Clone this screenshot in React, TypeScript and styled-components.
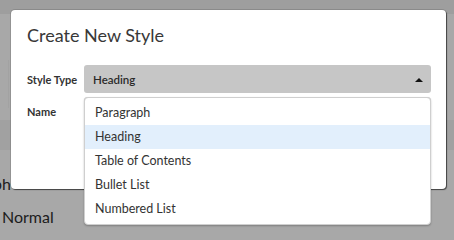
import React from "react";
import styled, { createGlobalStyle } from "styled-components";

const Global = createGlobalStyle`
  html, body { margin: 0; padding: 0; }
  body {
    width: 454px; height: 240px; overflow: hidden;
    font-family: Lato, "Open Sans", Arial, sans-serif;
    background: #a8a8a8;
  }
`;

const Page = styled.div`
  position: relative;
  width: 454px;
  height: 240px;
  overflow: hidden;
  display: flex;
  flex-direction: column;
  background: #a8a8a8;
`;

const TopStrip = styled.div`
  height: 14px;
  background: #9e9e9e;
  flex: none;
`;

const BackArea = styled.div`
  flex: none;
  height: 106px;
  display: flex;
`;

const FaintRule = styled.div`
  width: 1px;
  margin: 46px 0 12px 8px;
  background: #a2a2a2;
`;

const Band = styled.div`
  height: 30px;
  flex: none;
  background: #a1a1a1;
`;

const BackText = styled.div<{ $shift: number; $top: number }>`
  margin-left: ${(p) => p.$shift}px;
  margin-top: ${(p) => p.$top}px;
  font-size: 16px;
  line-height: 20px;
  color: #1c1c1c;
  white-space: nowrap;
`;

const Modal = styled.div`
  position: absolute;
  left: 11px;
  top: 10px;
  width: 435px;
  height: 179px;
  box-sizing: border-box;
  background: #fff;
  border-radius: 4px;
  box-shadow: 1px 1px 1px rgba(0, 0, 0, 0.55), 0 0 0 1px rgba(0, 0, 0, 0.12);
  padding: 13px 15px 0 16px;
  display: flex;
  flex-direction: column;
`;

const Title = styled.h1`
  margin: 0;
  font-size: 18px;
  line-height: 24px;
  font-weight: 400;
  color: #383838;
`;

const Form = styled.div`
  margin-top: 18px;
  display: flex;
  flex-direction: column;
  gap: 4px;
`;

const Row = styled.div`
  display: flex;
  align-items: center;
`;

const Label = styled.div`
  width: 57px;
  flex: none;
  font-size: 11px;
  font-weight: 700;
  color: #333;
`;

const SelectWrap = styled.div`
  position: relative;
  flex: 1;
`;

const SelectBox = styled.div`
  height: 28px;
  box-sizing: border-box;
  background: #c6c6c6;
  border-radius: 3px;
  display: flex;
  align-items: center;
  justify-content: space-between;
  padding: 0 4px 0 9px;
  font-size: 11.5px;
  font-weight: 600;
  color: #2a2a2a;
`;

const Caret = styled.svg`
  width: 8px;
  height: 4px;
  margin-right: 4px;
  margin-top: 1px;
`;

const InputBox = styled.div`
  flex: 1;
  height: 28px;
  border: 1px solid #ccc;
  border-radius: 3px;
  box-sizing: border-box;
`;

const Menu = styled.ul`
  position: absolute;
  left: 0;
  right: 0;
  top: calc(100% + 4px);
  margin: 0;
  padding: 3px 0 3px;
  list-style: none;
  background: #fff;
  border: 1px solid #cfcfcf;
  border-radius: 4px;
  box-shadow: 0 1px 2px rgba(0, 0, 0, 0.25);
  z-index: 2;
`;

const Item = styled.li<{ $active?: boolean }>`
  height: 24px;
  line-height: 24px;
  padding-left: 10px;
  font-size: 12.5px;
  color: #333;
  background: ${(p) => (p.$active ? "#e2effc" : "transparent")};
`;

const options = ["Paragraph", "Heading", "Table of Contents", "Bullet List", "Numbered List"];

export default function App() {
  return (
    <Page>
      <Global />
      <TopStrip />
      <BackArea>
        <FaintRule />
      </BackArea>
      <Band />
      <BackText $shift={-60} $top={24}>Paragraph</BackText>
      <BackText $shift={2} $top={13}>Normal</BackText>
      <Modal>
        <Title>Create New Style</Title>
        <Form>
          <Row>
            <Label>Style Type</Label>
            <SelectWrap>
              <SelectBox>
                <span>Heading</span>
                <Caret viewBox="0 0 8 4">
                  <path d="M0 4 L4 0 L8 4 Z" fill="#111" />
                </Caret>
              </SelectBox>
              <Menu>
                {options.map((o) => (
                  <Item key={o} $active={o === "Heading"}>
                    {o}
                  </Item>
                ))}
              </Menu>
            </SelectWrap>
          </Row>
          <Row>
            <Label>Name</Label>
            <InputBox />
          </Row>
        </Form>
      </Modal>
    </Page>
  );
}
